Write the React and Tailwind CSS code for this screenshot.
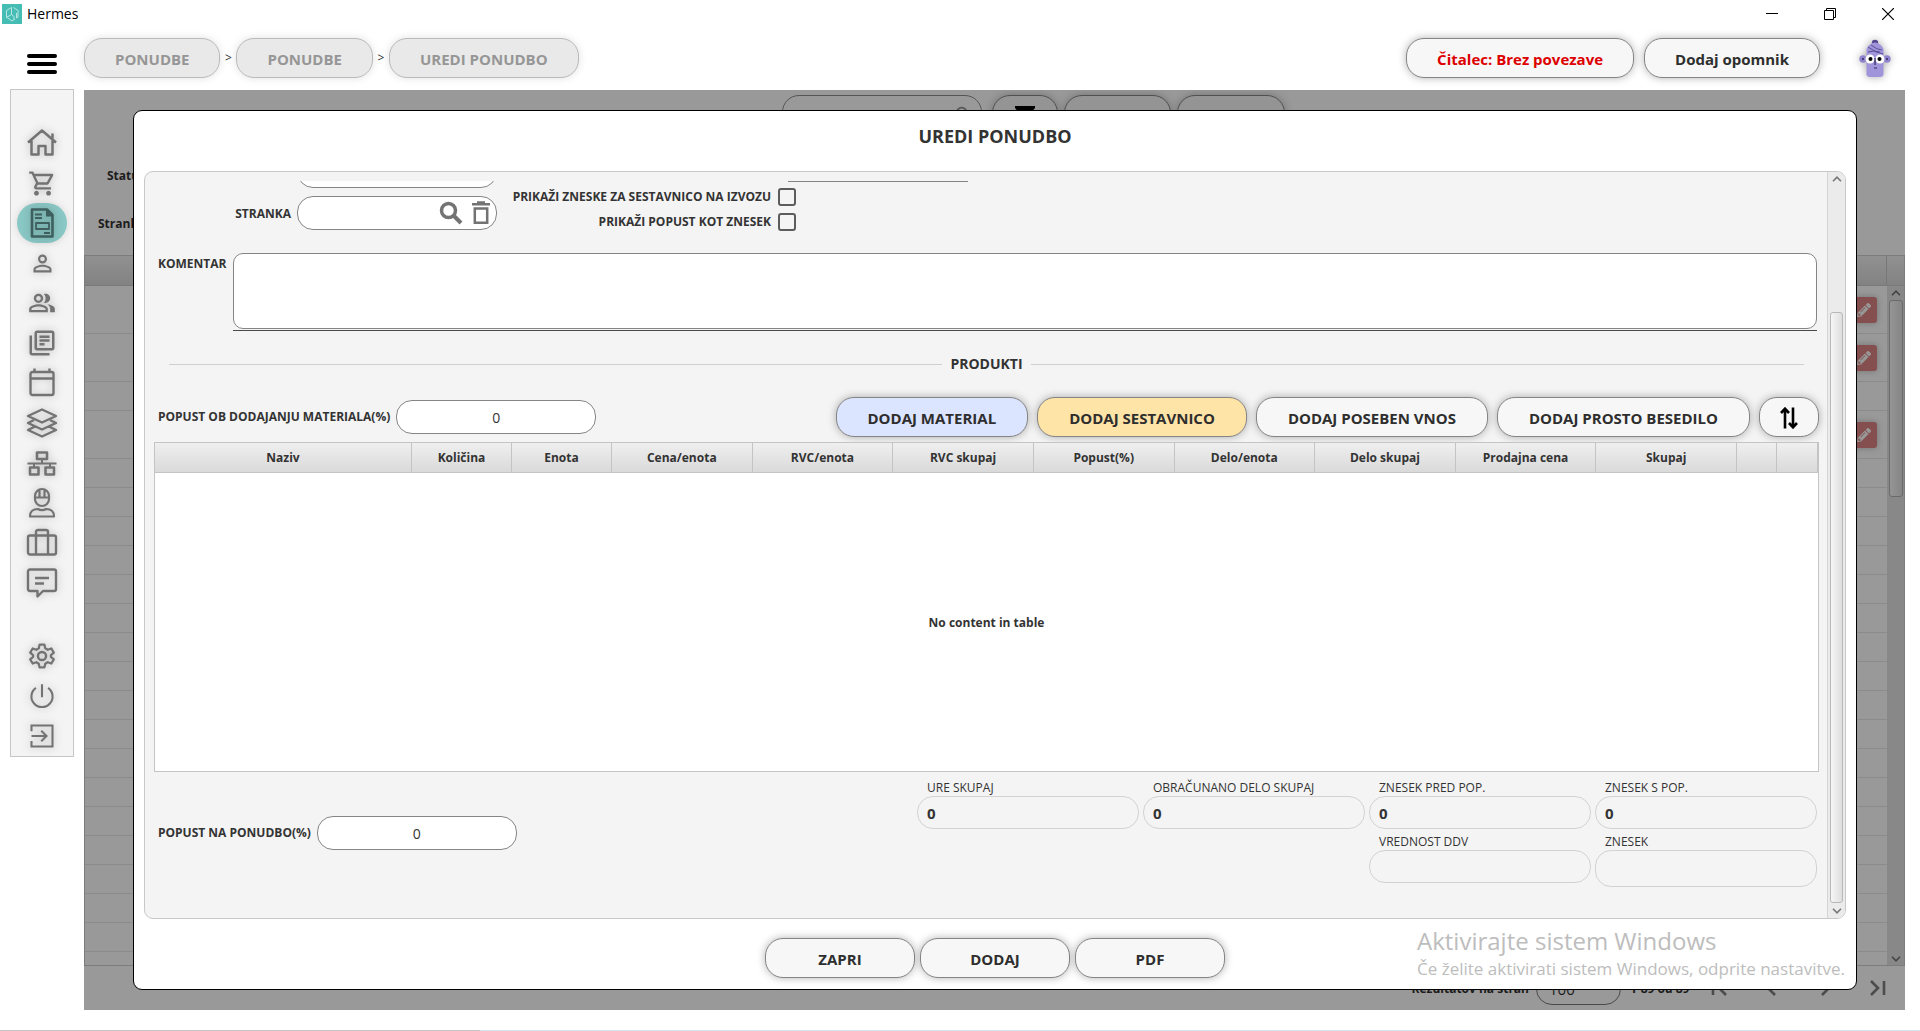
import {
  MdOutlineShoppingCart, MdPersonOutline, MdOutlinePeopleAlt, MdOutlineLibraryBooks, MdSearch,
} from "react-icons/md";
import { FaPencilAlt } from "react-icons/fa";

const stroke = { fill: "none", stroke: "currentColor", strokeWidth: 2 };

function Icon({ children, size = 32 }) {
  return (
    <svg width={size} height={size} viewBox="0 0 32 32" {...stroke} strokeLinejoin="round">
      {children}
    </svg>
  );
}

const navItems = [
  ["Domov", <Icon><path d="M2 15.500 16 3.500l14 12M5.500 13.500v14h7v-8.500h7v8.500h7v-14M26.500 11.500V6.500" strokeWidth="2.500" /></Icon>],
  ["Nakup", <MdOutlineShoppingCart size={29} />],
  ["Ponudbe", (
    <Icon>
      <path d="M6 2.500h15l5.500 5.500v21.500H6z" strokeWidth="2.600" />
      <path d="M20 2.500v7h7z" fill="currentColor" stroke="none" />
      <path d="M9 7.500h7M9 11h7M18 26h6" strokeWidth="1.800" />
      <path d="M10 16h13v6H10z" strokeWidth="1.800" />
    </Icon>
  ), true],
  ["Stranka", <MdPersonOutline size={27} />],
  ["Stranke", <MdOutlinePeopleAlt size={28} />],
  ["Dokumenti", <MdOutlineLibraryBooks size={30} />],
  ["Koledar", (
    <Icon>
      <rect x="4.500" y="5" width="23" height="23" rx="2" strokeWidth="2.400" />
      <path d="M4.500 11.500h23M8.500 1.500V5M23.500 1.500V5" strokeWidth="2.400" />
    </Icon>
  )],
  ["Skladišče", (
    <Icon>
      <path d="M16 2.500 30 9l-14 6.500L2 9z" strokeWidth="2.400" />
      <path d="M8 13 2 16l14 6.500L30 16l-6-3M8 20l-6 3 14 6.500L30 23l-6-3" strokeWidth="2.400" />
    </Icon>
  )],
  ["Struktura", (
    <Icon>
      <path d="M11 5.500h10V12H11zM4 20.500h8.500v7H4zM19.500 20.500H28v7h-8.500z" strokeWidth="2.600" />
      <path d="M1.500 16.500h29M16 12v4.500M8 16.500v4M24 16.500v4" strokeWidth="2" />
    </Icon>
  )],
  ["Delavci", (
    <Icon>
      <path d="M9 9a7 7 0 0 1 14 0v3a7 7 0 0 1-14 0zM8 10.500h16M13.500 3v7M18.500 3v7" strokeWidth="2.200" />
      <path d="M4 29.500c0-5 3-7.500 8-7.500 2 1.500 6 1.500 8 0 5 0 8 2.500 8 7.500z" strokeWidth="2.200" />
    </Icon>
  )],
  ["Potovanja", (
    <Icon>
      <rect x="2" y="8.500" width="28" height="19" rx="2" strokeWidth="2.400" />
      <path d="M10 27.500V5q0-2 2-2h8q2 0 2 2v22.500" strokeWidth="2.400" />
    </Icon>
  )],
  ["Sporočila", (
    <Icon>
      <path d="M4 2.500h24q2 0 2 2V22q0 2-2 2H17l-5.500 5.500V24H4q-2 0-2-2V4.500q0-2 2-2z" strokeWidth="2.400" />
      <path d="M9 11h14M9 16.500h9" strokeWidth="2.400" />
    </Icon>
  )],
];

const systemItems = [
  ["Nastavitve", (
    <Icon size={26}>
      <circle cx="16" cy="16" r="5" strokeWidth="3" />
      <path d="M13 2h6l1 4.500 3 1.800 4.500-1.500 3 5L27 15v2l3.500 3.200-3 5L23 23.700l-3 1.800L19 30h-6l-1-4.500-3-1.800-4.500 1.500-3-5L5 17v-2l-3.500-3.200 3-5L9 8.300l3-1.800z" strokeWidth="2.800" />
    </Icon>
  )],
  ["Izklop", (
    <Icon size={26}>
      <path d="M16 1.500v16M8.500 6a13 13 0 1 0 15 0" strokeWidth="2.600" />
    </Icon>
  )],
  ["Odjava", (
    <Icon size={24}>
      <path d="M2 9.500V2h28v28H2v-7.500M2 16h19M15 9l7 7-7 7" strokeWidth="2.800" strokeLinejoin="miter" />
    </Icon>
  )],
];

function NavButton({ label, active, children }) {
  return (
    <button
      aria-label={label}
      className={
        "flex h-10 w-[50px] items-center justify-center rounded-[20px] [&_svg]:drop-shadow-[0_0_4px_rgba(0,0,0,0.25)] " +
        (active ? "bg-[#8ac8c5] text-[#3f5f5f] shadow-[0_0_8px_rgba(0,0,0,0.12)]" : "text-[#737373]")
      }
    >
      {children}
    </button>
  );
}

function PillButton({ children, tone = "bg-[#f7f7f7] text-[#2e2e2e]", className = "px-[30px]", ...rest }) {
  return (
    <button
      {...rest}
      className={
        "flex h-10 shrink-0 items-center justify-center rounded-[18px] border border-[#858585] pt-[2px] text-[15px] font-bold whitespace-nowrap shadow-[0_0_9px_rgba(0,0,0,0.3)] " +
        tone + " " + className
      }
    >
      {children}
    </button>
  );
}

function Crumb({ children }) {
  return (
    <button className="flex h-10 items-center rounded-[18px] border border-[#bababa] bg-[#e9e9e9] px-[30px] pt-[2px] text-[15px] font-bold text-[#969696] shadow-[0_0_8px_rgba(0,0,0,0.12)]">
      {children}
    </button>
  );
}

function Chevron({ up }) {
  return (
    <svg width="10" height="6" viewBox="0 0 10 6" fill="none" stroke="currentColor" strokeWidth="1.600">
      <path d={up ? "M1 5.200 5 1.200l4 4" : "M1 .8l4 4 4-4"} />
    </svg>
  );
}

function TitleBar() {
  return (
    <div className="flex h-7 items-center">
      <div className="flex flex-1 items-center gap-[5px] pl-[2px]">
        <svg width="20" height="20" viewBox="0 0 20 20">
          <path fill="#45bdb5" d="M0 0h20v20H0z" />
          <path d="M9.500 3.500 4.500 6.500v6.500l5.500 4 3-2M9.500 3.500v7l-5 3M9.500 10.500l2.500 2v3M11.500 3.500 16 6.500v6.500l-1.500 1V9" fill="none" stroke="#c4ebe8" strokeWidth=".9" />
        </svg>
        <span className="text-sm leading-5 text-black">Hermes</span>
      </div>
      <div className="flex items-center gap-[46px] pr-[26px]">
        <button aria-label="Pomanjšaj"><svg width="12" height="12" viewBox="0 0 12 12"><path d="M0 5.500h12" stroke="#000" /></svg></button>
        <button aria-label="Obnovi"><svg width="12" height="12" viewBox="0 0 12 12" fill="none" stroke="#000"><path d="M.5 2.500h9v9h-9zM2.500 2.500v-2h9v9h-2" /></svg></button>
        <button aria-label="Zapri okno"><svg width="12" height="12" viewBox="0 0 12 12" stroke="#000" strokeWidth="1.200"><path d="m0 0 12 12M12 0 0 12" /></svg></button>
      </div>
    </div>
  );
}

function Avatar() {
  return (
    <svg width="32" height="40" viewBox="0 0 32 40" className="drop-shadow-[0_0_4px_rgba(0,0,0,0.35)]">
      <circle cx="4" cy="21" r="3.700" fill="#8f83cd" />
      <circle cx="28" cy="21" r="3.700" fill="#8f83cd" />
      <circle cx="16" cy="5" r="3.200" fill="#54468c" />
      <path d="M7.500 11q3-6 8.500-6.500 5.500.5 8.500 6.500v26q-1 2-3 2h-11q-2 0-3-2z" fill="#a094db" />
      <path d="M12 7q6 5 11 5M9 9q8 6 15 7M9 14q6-2 12 0" stroke="#54468c" fill="none" strokeWidth=".9" />
      <circle cx="11" cy="21" r="4.500" fill="#fff" />
      <circle cx="21" cy="21" r="4.500" fill="#fff" />
      <circle cx="11.500" cy="21" r="2" />
      <circle cx="20.500" cy="21" r="2" />
      <path d="M16 20v7M15 30h3" stroke="#332a5c" strokeWidth="1.200" />
      <circle cx="4" cy="21" r="1" fill="#332a5c" />
      <circle cx="28" cy="21" r="1" fill="#332a5c" />
    </svg>
  );
}

const backRows = [
  ["h-12", true], ["h-12", true], ["h-[29px]", false], ["h-12", true],
  ...Array.from({ length: 17 }, () => ["h-[29px]", false]),
];

function OffersPage() {
  return (
    <div className="flex h-full flex-col overflow-hidden text-xs font-bold text-[#1c1c1c]">
      <div className="flex h-[165px] shrink-0 flex-col">
        <div className="flex h-[78px] items-start pt-[5px] pl-[698px]">
          <div className="flex h-[34px] w-[200px] justify-end rounded-[18px] border border-[#555] pt-[8px] pr-[6px] text-[#555]">
            <MdSearch size={22} />
          </div>
          <button aria-label="Filter" className="ml-[10px] flex h-10 w-[66px] justify-center rounded-[18px] border border-[#505050] bg-[#949494] pt-[10px] shadow-[0_0_8px_rgba(0,0,0,0.25)]">
            <svg width="20" height="20" viewBox="0 0 20 20"><path d="M0 0h20v2l-7 8v9l-6-3v-6L0 2z" /></svg>
          </button>
          <button aria-label="Išči" className="ml-[6px] h-10 w-[107px] rounded-[18px] border border-[#505050] bg-[#949494] shadow-[0_0_8px_rgba(0,0,0,0.25)]" />
          <button aria-label="Počisti" className="ml-[6px] h-10 w-[108px] rounded-[18px] border border-[#505050] bg-[#949494] shadow-[0_0_8px_rgba(0,0,0,0.25)]" />
        </div>
        <div className="h-12 pl-[23px] leading-4">Status</div>
        <div className="pl-[14px] leading-4">Stranka</div>
      </div>
      <div className="flex min-h-0 flex-1 flex-col border border-[#7c7c7c]">
        <div className="flex h-[30px] shrink-0 border-b border-[#7a7a7a] bg-linear-to-b from-[#919191] to-[#828282]">
          <div className="flex-1 border-r border-[#777]" />
          <div className="w-[17px]" />
        </div>
        <div className="flex min-h-0 flex-1">
          <div className="flex-1 overflow-hidden">
            {backRows.map(([height, editable], i) => (
              <div key={i} className={"flex items-center justify-end border-b border-[#8b8b8b] pr-[10px] " + height}>
                {editable && (
                  <button aria-label="Uredi" className="flex h-[26px] w-[26px] items-center justify-center rounded-[3px] bg-[#864f4f] text-[#989898] shadow-[0_0_6px_rgba(0,0,0,0.25)]">
                    <FaPencilAlt size={14} />
                  </button>
                )}
              </div>
            ))}
          </div>
          <div className="flex w-[17px] flex-col items-center bg-[#888] text-[#444]">
            <div className="flex h-[14px] items-center"><Chevron up /></div>
            <div className="h-[197px] w-[14px] rounded-[3px] border border-[#6b6b6b] bg-linear-to-r from-[#959595] to-[#858585]" />
            <div className="flex-1" />
            <div className="flex h-[13px] items-center"><Chevron /></div>
          </div>
        </div>
      </div>
      <div className="flex h-11 shrink-0 items-center justify-end pr-[18px]">
        <label htmlFor="page-size" className="pt-[2px]">Rezultatov na stran</label>
        <select id="page-size" className="ml-[7px] h-[34px] w-[85px] appearance-none rounded-[16px] border border-[#4a4a4a] px-[12px] pt-[2px] text-[15px] font-normal">
          <option>100</option>
        </select>
        <span className="ml-[9px] w-[80px] pt-[2px]">1-89 od 89</span>
        <span className="flex items-center gap-[35px] text-[#4c4c4c]">
          {[["Prva", "M3 2v14M16 2 9 9l7 7"], ["Prejšnja", "M12 2 5 9l7 7"], ["Naslednja", "m6 2 7 7-7 7"], ["Zadnja", "m2 2 7 7-7 7M15 2v14"]].map(([label, d]) => (
            <button key={label} aria-label={label}>
              <svg width="18" height="18" viewBox="0 0 18 18" fill="none" stroke="currentColor" strokeWidth="2.600"><path d={d} /></svg>
            </button>
          ))}
        </span>
      </div>
    </div>
  );
}

const columns = [
  ["Naziv", "w-[257px]"], ["Količina", "w-[100px]"], ["Enota", "w-[100px]"], ["Cena/enota", ""], ["RVC/enota", ""],
  ["RVC skupaj", ""], ["Popust(%)", ""], ["Delo/enota", ""], ["Delo skupaj", ""], ["Prodajna cena", ""], ["Skupaj", ""],
  ["", "w-[40px]"], ["", "w-[41px]"],
];

const summary = [
  ["URE SKUPAJ", "0"], ["OBRAČUNANO DELO SKUPAJ", "0"], ["ZNESEK PRED POP.", "0"], ["ZNESEK S POP.", "0"],
  ["VREDNOST DDV", "", "col-start-3"], ["ZNESEK", "", "", "h-[37px]"],
];

function Percent({ id, label }) {
  return (
    <div className="flex items-center gap-[6px]">
      <label htmlFor={id} className="text-xs font-bold whitespace-nowrap">{label}</label>
      <input id={id} defaultValue="0" className="h-[34px] w-[200px] rounded-[16px] border border-[#858585] bg-white text-center text-sm" />
    </div>
  );
}

function OfferForm() {
  return (
    <div className="flex min-w-0 flex-1 flex-col pt-[9px] pr-[8px] pl-[9px]">
      <div className="flex h-[72px] shrink-0 overflow-hidden text-xs font-bold">
        <div className="flex w-[343px] flex-col items-end">
          <div className="flex h-[7px] w-[200px] items-end overflow-hidden">
            <input aria-label="Številka" className="h-[34px] w-full shrink-0 rounded-[16px] border border-[#858585] bg-white" />
          </div>
          <div className="mt-2 flex items-center gap-[6px]">
            <label htmlFor="customer" className="pt-px">STRANKA</label>
            <div className="flex h-[34px] w-[200px] items-center rounded-[16px] border border-[#858585] bg-white pr-[6px] text-[#737373]">
              <input id="customer" className="min-w-0 flex-1 pl-3 outline-none" />
              <button aria-label="Poišči stranko" className="mr-[9px]">
                <svg width="24" height="24" viewBox="0 0 24 24" fill="none" stroke="currentColor" strokeWidth="3.500">
                  <circle cx="9.500" cy="9.500" r="7" /><path d="m15 15 7 7" strokeWidth="4" />
                </svg>
              </button>
              <button aria-label="Odstrani stranko">
                <svg width="18" height="24" viewBox="0 0 18 24" fill="none" stroke="currentColor" strokeWidth="2.500">
                  <path d="M0 3.200h18M5 1.500h8M2.800 7.500h12.400v14.200H2.800z" />
                </svg>
              </button>
            </div>
          </div>
        </div>
        <div className="flex w-[299px] flex-col items-end gap-[7px] pt-[7px]">
          {["PRIKAŽI ZNESKE ZA SESTAVNICO NA IZVOZU", "PRIKAŽI POPUST KOT ZNESEK"].map((label) => (
            <label key={label} className="flex items-center gap-[7px] whitespace-nowrap">
              {label}
              <input type="checkbox" className="h-[18px] w-[18px] appearance-none rounded-[3px] border-2 border-[#5c5c5c] bg-[#f4f4f4]" />
            </label>
          ))}
        </div>
        <div className="-ml-3 flex h-px w-[184px] items-end overflow-hidden pl-1">
          <input aria-label="Datum" className="h-[34px] w-full shrink-0 border border-[#858585] bg-white" />
        </div>
      </div>

      <div className="flex shrink-0 gap-[7px] pr-[2px] pl-[4px]">
        <label htmlFor="comment" className="pt-[3px] text-xs leading-4 font-bold">KOMENTAR</label>
        <div className="flex-1 border-b border-[#4a4a4a] pb-px">
          <textarea id="comment" className="block h-[76px] w-full resize-none rounded-[10px] border border-[#858585] bg-white p-2 text-sm" />
        </div>
      </div>

      <div className="mt-[23px] flex h-5 shrink-0 items-center gap-2 pr-[15px] pl-[15px]">
        <div className="h-px flex-1 bg-[#cfcfcf]" />
        <h3 className="text-sm leading-5 font-bold">PRODUKTI</h3>
        <div className="h-px flex-1 bg-[#cfcfcf]" />
      </div>

      <div className="mt-[23px] flex shrink-0 items-center justify-between pl-[4px]">
        <Percent id="material-discount" label="POPUST OB DODAJANJU MATERIALA(%)" />
        <div className="flex gap-[9px]">
          <PillButton tone="bg-[#dce5ff] text-[#2e2e2e]" className="px-[31px]">DODAJ MATERIAL</PillButton>
          <PillButton tone="bg-[#ffe4a8] text-[#2e2e2e]" className="px-[31px]">DODAJ SESTAVNICO</PillButton>
          <PillButton className="px-[31px]">DODAJ POSEBEN VNOS</PillButton>
          <PillButton className="px-[31px]">DODAJ PROSTO BESEDILO</PillButton>
          <PillButton aria-label="Razvrsti" className="w-[60px]">
            <svg width="18" height="22" viewBox="0 0 18 22" fill="none" stroke="#000" strokeWidth="2.600">
              <path d="M5 21.500V2M1 6l4-4.300L9 6M13 .5V20M9 16l4 4.300 4-4.300" />
            </svg>
          </PillButton>
        </div>
      </div>

      <div className="mt-[5px] flex min-h-0 flex-1 flex-col border border-[#c4c4c4] bg-white">
        <table className="w-full table-fixed border-separate border-spacing-0 text-xs">
          <thead>
            <tr className="h-[30px] bg-linear-to-b from-[#efefef] to-[#d9d9d9]">
              {columns.map(([name, width], i) => (
                <th key={i} className={"border-r border-b border-[#c4c4c4] font-bold " + width}>{name}</th>
              ))}
            </tr>
          </thead>
        </table>
        <div className="flex flex-1 items-center justify-center pt-px text-xs font-bold">No content in table</div>
      </div>

      <div className="flex h-[146px] shrink-0 items-start justify-between pr-[2px] pl-[4px]">
        <div className="pt-[44px]">
          <Percent id="offer-discount" label="POPUST NA PONUDBO(%)" />
        </div>
        <div className="grid w-[900px] grid-cols-4 gap-x-1 gap-y-[5px] pt-[8px]">
          {summary.map(([label, value, place = "", height = "h-[33px]"]) => (
            <label key={label} className={"flex flex-col text-xs leading-4 " + place}>
              <span className="pl-[10px]">{label}</span>
              <input readOnly value={value} className={"w-full rounded-[16px] border border-[#d2d2d2] px-[9px] text-[15px] font-bold " + height} />
            </label>
          ))}
        </div>
      </div>
    </div>
  );
}

function OfferDialog() {
  return (
    <div role="dialog" aria-label="Uredi ponudbo" className="absolute inset-y-5 right-12 left-[49px] flex flex-col rounded-[9px] border border-black bg-white">
      <h2 className="flex h-[60px] shrink-0 items-start justify-center pt-[13px] text-lg leading-6 font-bold">UREDI PONUDBO</h2>
      <div className="mx-[10px] flex min-h-0 flex-1 overflow-hidden rounded-[9px] border border-[#c8c8c8] bg-[#f4f4f4]">
        <OfferForm />
        <div className="flex w-[18px] flex-col items-center border-l border-[#d4d4d4] bg-[#ebebeb] text-[#777]">
          <div className="flex h-[14px] items-center"><Chevron up /></div>
          <div className="h-[126px]" />
          <div className="w-[13px] flex-1 rounded-[3px] border border-[#b8b8b8] bg-linear-to-r from-[#f6f6f6] to-[#dedede]" />
          <div className="flex h-[15px] items-center"><Chevron /></div>
        </div>
      </div>
      <div className="flex h-[70px] shrink-0 items-center justify-center gap-[5px] pt-2">
        <PillButton className="w-[150px]">ZAPRI</PillButton>
        <PillButton className="w-[150px]">DODAJ</PillButton>
        <PillButton className="w-[150px]">PDF</PillButton>
      </div>
    </div>
  );
}

export default function App() {
  return (
    <div className="relative flex h-screen min-h-[760px] flex-col bg-white font-['Open_Sans',sans-serif] text-[#333]">
      <TitleBar />
      <header className="flex h-[62px] shrink-0 items-center pr-[29px] pb-[2px]">
        <button aria-label="Meni" className="ml-[27px] flex w-[57px] flex-col gap-1 pt-[12px]">
          <span className="h-1 w-[30px] rounded-full bg-black" />
          <span className="h-1 w-[30px] rounded-full bg-black" />
          <span className="h-1 w-[30px] rounded-full bg-black" />
        </button>
        <nav className="flex flex-1 items-center text-xs">
          <Crumb>PONUDBE</Crumb>
          <span className="w-4 text-center">&gt;</span>
          <Crumb>PONUDBE</Crumb>
          <span className="w-4 text-center">&gt;</span>
          <Crumb>UREDI PONUDBO</Crumb>
        </nav>
        <div className="flex items-center gap-[10px]">
          <PillButton tone="bg-[#f7f7f7] text-[#dd0000]">Čitalec: Brez povezave</PillButton>
          <PillButton>Dodaj opomnik</PillButton>
        </div>
        <button aria-label="Profil" className="ml-[39px]"><Avatar /></button>
      </header>

      <div className="flex min-h-0 flex-1 pr-[15px] pb-[21px]">
        <aside className="-mt-px ml-[10px] flex w-16 flex-col items-center self-start border border-[#c6c6c6] bg-[#f4f4f4] pt-[33px]">
          {navItems.map(([label, icon, active]) => (
            <NavButton key={label} label={label} active={active}>{icon}</NavButton>
          ))}
          <div className="h-[33px]" />
          {systemItems.map(([label, icon]) => (
            <NavButton key={label} label={label}>{icon}</NavButton>
          ))}
        </aside>
        <main className="relative ml-[10px] min-w-0 flex-1 bg-[#999]">
          <OffersPage />
          <OfferDialog />
        </main>
      </div>

      <div className="pointer-events-none absolute right-[75px] bottom-12 text-[#bdbdbd]">
        <p className="text-2xl leading-7">Aktivirajte sistem Windows</p>
        <p className="text-[17px] leading-7">Če želite aktivirati sistem Windows, odprite nastavitve.</p>
      </div>
      <div className="absolute inset-x-0 bottom-0 flex h-px">
        <div className="w-1/4 bg-[#c4c4c4]" />
        <div className="flex-1 bg-[#cfe6ee]" />
      </div>
    </div>
  );
}
